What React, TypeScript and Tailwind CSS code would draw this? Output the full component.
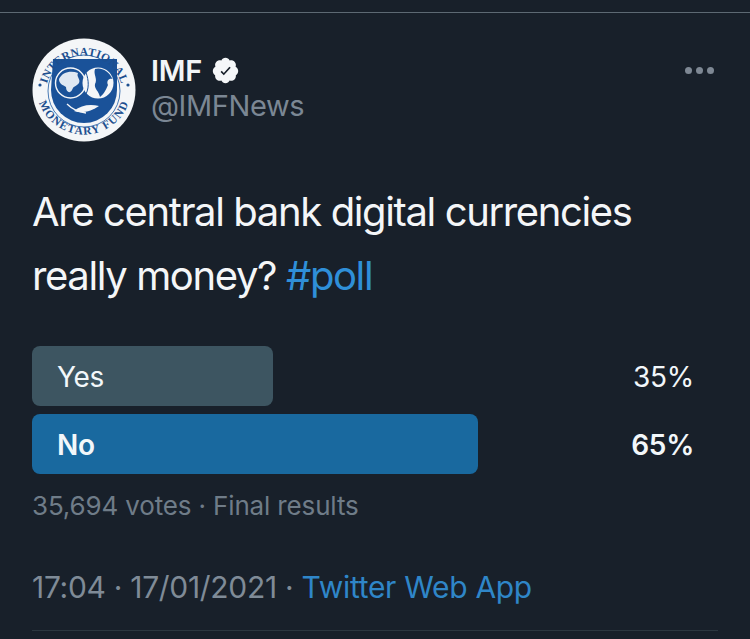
const ImfLogo = () => (
  <svg viewBox="0 0 104 104" className="w-[104px] h-[104px] shrink-0">
    <defs>
      <path id="arcTop" d="M 13.5 56 A 38.5 38.5 0 0 1 90.5 56" />
      <path id="arcBottom" d="M 4.5 49 A 47.5 47.5 0 0 0 99.5 49" />
    </defs>
    <circle cx="52" cy="52" r="51.5" fill="#f4f6f8" />
    <circle cx="52" cy="53" r="36" fill="none" stroke="#1d5aa3" strokeWidth="0.8" />
    {/* shield */}
    <path d="M 21 21 L 85 21 L 85 52 A 33 33 0 0 1 19 52 Z" fill="#1a5299" />
    {/* globes */}
    <circle cx="38.5" cy="45" r="15" fill="#1a5299" stroke="#f4f6f8" strokeWidth="1.4" />
    <circle cx="66" cy="45" r="15.5" fill="#f4f6f8" />
    <path d="M 27 41 C 30 34 39 32 46 35 C 44 39 49 41 47 45 C 44 49 42 47 40 52 C 38 56 34 54 34 49 C 31 47 27 46 27 41 Z" fill="#dfe8f2" />
    <path d="M 63 31 C 69 29 77 33 80.5 41 C 77 40 74 43 76 47 C 74 52 71 57 68 59 C 67 53 62 51 63 46 C 66 41 61 36 63 31 Z" fill="#1a5299" />
    <path d="M 53 32 C 56 39 58 48 54 56" fill="none" stroke="#1a5299" strokeWidth="1" />
    {/* laurel */}
    <path d="M 42 73 C 49 67 58 66 67 68 C 60 73 50 76 42 73 Z" fill="#f4f6f8" />
    <path d="M 35 66 C 40 71 46 74 54 75" fill="none" stroke="#f4f6f8" strokeWidth="1.3" />
    <text fontFamily="Liberation Serif, serif" fontWeight="700" fontSize="11.5" fill="#1d4f8f" letterSpacing="0.2" textAnchor="middle">
      <textPath href="#arcTop" startOffset="50%">INTERNATIONAL</textPath>
    </text>
    <text fontFamily="Liberation Serif, serif" fontWeight="700" fontSize="11.5" fill="#1d4f8f" letterSpacing="1.2" textAnchor="middle">
      <textPath href="#arcBottom" startOffset="50%">MONETARY FUND</textPath>
    </text>
    <circle cx="8" cy="47" r="1.6" fill="#1d4f8f" />
    <circle cx="96" cy="47" r="1.6" fill="#1d4f8f" />
  </svg>
);

const VerifiedBadge = () => (
  <svg viewBox="0 0 24 24" className="w-[29px] h-[29px] shrink-0">
    <path
      fill="#f5f7f9"
      d="M22.5 12.5c0-1.58-.875-2.95-2.148-3.6.154-.435.238-.905.238-1.4 0-2.21-1.71-3.998-3.818-3.998-.47 0-.92.084-1.336.25C14.818 2.415 13.51 1.5 12 1.5s-2.816.917-3.437 2.25c-.415-.165-.866-.25-1.336-.25-2.11 0-3.818 1.79-3.818 4 0 .494.083.964.237 1.4-1.272.65-2.147 2.018-2.147 3.6 0 1.495.782 2.798 1.942 3.486-.02.17-.032.34-.032.514 0 2.21 1.708 4 3.818 4 .47 0 .92-.086 1.335-.25.62 1.334 1.926 2.25 3.437 2.25 1.512 0 2.818-.916 3.437-2.25.415.163.865.248 1.336.248 2.11 0 3.818-1.79 3.818-4 0-.174-.012-.344-.033-.513 1.158-.687 1.943-1.99 1.943-3.484z"
    />
    <path fill="#18202a" d="M10.6 16 7.9 13.3l1-1 1.7 1.7 4.6-5.2 1.1.9z" />
  </svg>
);

const PollRow = ({
  label,
  percent,
  barClass,
  bold,
}: {
  label: string;
  percent: string;
  barClass: string;
  bold?: boolean;
}) => (
  <div className="flex items-center justify-between h-[60px]">
    <div className={`h-full rounded-[8px] flex items-center pl-[25px] ${barClass}`}>
      <span className={`text-[28px] tracking-[-0.3px] pt-[2px] text-[#f2f7fa] ${bold ? "font-semibold" : "font-normal"}`}>{label}</span>
    </div>
    <span className={`text-[28px] tracking-[-0.3px] pt-[2px] text-[#f2f7fa] pr-[24px] ${bold ? "font-semibold" : "font-normal"}`}>{percent}</span>
  </div>
);

export default function App() {
  return (
    <div className="w-[750px] h-[639px] overflow-hidden bg-[#18202a] pt-[12px] font-['Inter','Liberation_Sans',sans-serif]">
      <div className="h-px bg-[#5d6973]"></div>

      <div className="px-[32px]">
        <div className="flex items-center pt-[25px]">
          <ImfLogo />
          <div className="ml-[15px] flex-1 -mt-[4px]">
            <div className="flex items-center gap-[9px] h-[36px]">
              <span className="text-[29px] font-semibold tracking-[-0.3px] text-[#f2f5f7] leading-none">IMF</span>
              <VerifiedBadge />
            </div>
            <div className="text-[29px] tracking-[-0.4px] text-[#7b8794] leading-[36px]">@IMFNews</div>
          </div>
          <div className="flex gap-[4px] self-start mt-[29px] mr-[4px]">
            <div className="w-[7px] h-[7px] rounded-full bg-[#7e8894]"></div>
            <div className="w-[7px] h-[7px] rounded-full bg-[#7e8894]"></div>
            <div className="w-[7px] h-[7px] rounded-full bg-[#7e8894]"></div>
          </div>
        </div>

        <div className="mt-[38px] text-[40px] leading-[64px] tracking-[-1.38px] text-[#f4f6f8]">
          Are central bank digital currencies
          <br />
          really money? <span className="text-[#2f8fd8]">#poll</span>
        </div>

        <div className="mt-[38px] flex flex-col gap-[8px]">
          <PollRow label="Yes" percent="35%" barClass="w-[241px] bg-[#3d5561]" />
          <PollRow label="No" percent="65%" barClass="w-[446px] bg-[#19699f]" bold />
        </div>

        <div className="mt-[17px] text-[26px] tracking-[-0.15px] leading-[30px] text-[#6f7c88]">35,694 votes · Final results</div>

        <div className="mt-[48px] text-[30px] tracking-[-0.3px] leading-[36px] text-[#7f8b97]">
          17:04 · 17/01/2021 · <span className="text-[#2f86c8]">Twitter Web App</span>
        </div>

        <div className="mt-[25px] h-px bg-[#2c3740]"></div>
      </div>
    </div>
  );
}
